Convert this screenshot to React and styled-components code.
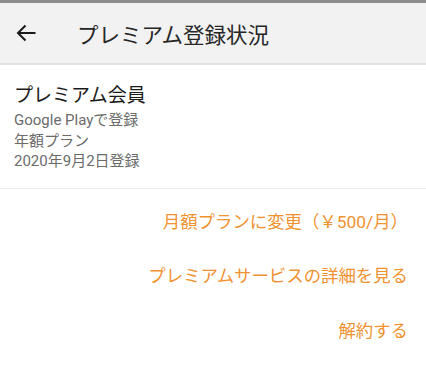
import React from 'react';
import styled, { createGlobalStyle } from 'styled-components';

const GlobalStyle = createGlobalStyle`
	body {
		margin: 0;
		background: #ffffff;
		font-family: Roboto, 'Noto Sans CJK JP', sans-serif;
	}
`;

const Page = styled.div`
	width: 426px;
	height: 371px;
	display: flex;
	flex-direction: column;
	background: #ffffff;
	overflow: hidden;
`;

const StatusStripe = styled.div`
	height: 3px;
	background: #8c8c8c;
`;

const HeaderBar = styled.div`
	height: 60px;
	display: flex;
	align-items: center;
	background: #f2f2f2;
	border-bottom: 2px solid #e3e3e3;
`;

const BackButton = styled.div`
	width: 77px;
	display: flex;
	align-items: center;
	padding-left: 16px;
	box-sizing: border-box;
`;

const HeaderTitle = styled.div`
	font-size: 21.5px;
	color: #262626;
`;

const MemberSection = styled.div`
	display: flex;
	flex-direction: column;
	padding: 18px 14px 16px;
	border-bottom: 1px solid #ececec;
`;

const MemberTitle = styled.div`
	font-size: 19px;
	line-height: 26px;
	color: #1a1a1a;
	margin-bottom: 1px;
`;

const MemberDetail = styled.div`
	font-size: 15px;
	line-height: 20.5px;
	color: #6b6b6b;
`;

const LinkList = styled.div`
	display: flex;
	flex-direction: column;
	align-items: flex-end;
	padding: 21px 18px 0 0;
	gap: 30px;
`;

const ActionLink = styled.div`
	font-size: 17.4px;
	line-height: 24.5px;
	color: #f0922f;
	cursor: pointer;
`;

const App = () => {
	return (
		<Page>
			<GlobalStyle />
			<StatusStripe />
			<HeaderBar>
				<BackButton>
					<svg width='20' height='18' viewBox='0 0 20 18'>
						<path
							d='M19.5 9H2M9.5 1.5L2 9l7.5 7.5'
							fill='none'
							stroke='#1a1a1a'
							strokeWidth='2'
						/>
					</svg>
				</BackButton>
				<HeaderTitle>プレミアム登録状況</HeaderTitle>
			</HeaderBar>
			<MemberSection>
				<MemberTitle>プレミアム会員</MemberTitle>
				<MemberDetail>Google Playで登録</MemberDetail>
				<MemberDetail>年額プラン</MemberDetail>
				<MemberDetail>2020年9月2日登録</MemberDetail>
			</MemberSection>
			<LinkList>
				<ActionLink>月額プランに変更（￥500/月）</ActionLink>
				<ActionLink>プレミアムサービスの詳細を見る</ActionLink>
				<ActionLink>解約する</ActionLink>
			</LinkList>
		</Page>
	);
};

export default App;
